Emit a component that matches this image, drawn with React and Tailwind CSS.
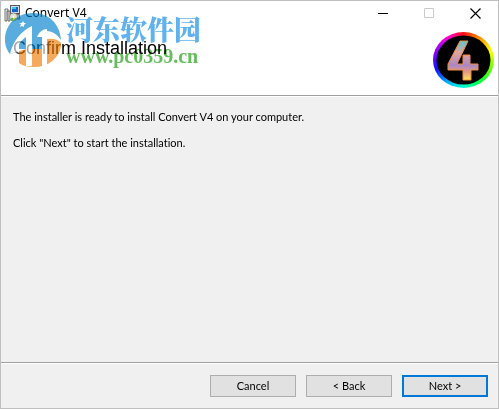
function InstallerIcon() {
  return (
    <svg width="17" height="17" viewBox="0 0 17 17" aria-hidden="true" className="shrink-0">
      <rect x="6.500" y="0.500" width="9" height="8" fill="#d5d8d8" stroke="#555b60" />
      <rect x="8" y="2" width="6" height="5" fill="#1463c6" />
      <path d="M8 2h4v2H8z" fill="#37c4ee" />
      <path d="M7 9h8l1 5H7z" fill="#b9bdb9" stroke="#444" />
      <path d="M1 4h3v2H3v10H1zM4 6h2v10H4z" fill="#e9e9e9" stroke="#555" strokeWidth="0.8" />
      <circle cx="9.500" cy="12" r="4" fill="#e2e5d2" stroke="#667" strokeWidth="0.6" />
      <path d="M9.500 12 6 14a4 4 0 0 0 3 2z" fill="#57b947" />
      <path d="M9.500 12 13 14a4 4 0 0 1-4 2z" fill="#e8c629" />
      <circle cx="9.500" cy="12" r="1" fill="#fff" />
    </svg>
  );
}

function WatermarkLogo() {
  return (
    <svg width="57" height="55" viewBox="0 0 57 55" aria-hidden="true" className="opacity-65">
      <path d="M5 41C1 36 0 31 0 27 0 11 12 0 28 0s27 11 28 27c-4-5-9-7-14-7v16H14v3c-3 0-6 1-9 2z" fill="#0280cd" />
      <path d="M56 30c0 7-3 13-9 18-5 4-11 6-18 6-6 0-11-1-15-4V38l7-2h21c7 1 12-1 14-6z" fill="#f07c08" />
      <path d="M5 41C8 28 16 18 27 13v40h-6V24c-3 2-5 4-7 7v9c-3-1-6 0-9 1z" fill="#fff" />
      <path d="M32 24c2-5 6-8 10-8v37h-5V24z" fill="#fff" />
      <path d="M41 18c7 0 13 4 15 11-4-4-9-5-15-5z" fill="#fff" />
      <path d="M42 26c5-1 11 0 14 4 0 7-3 13-9 18l-5 3z" fill="#f07c08" />
      <path d="m18 8 1 2h2l-2 2v2l-2-1-2 1 1-3-2-1h3z" fill="#fff" />
    </svg>
  );
}

function BrandLogo() {
  return (
    <div className="h-[56px] w-[61px] shrink-0 rounded-[50%] bg-[conic-gradient(#ff1010,#ff9000,#ffff00,#60ff00,#00ff40,#00ffd0,#00b0ff,#1010ff,#9000ff,#ff00e0,#ff1010)]">
      <svg width="61" height="56" viewBox="0 0 61 56" role="img" aria-label="Convert logo">
        <defs>
          <linearGradient id="four" x1="0" y1="0" x2="0" y2="1">
            <stop offset="0" stopColor="#5cc6d0" />
            <stop offset="0.3" stopColor="#e3a49c" />
            <stop offset="0.62" stopColor="#a987c5" />
            <stop offset="0.8" stopColor="#e79a82" />
            <stop offset="1" stopColor="#f8ea5b" />
          </linearGradient>
        </defs>
        <ellipse cx="30.500" cy="28" rx="27" ry="24.500" fill="#000" />
        <path d="M27 9h8L24 32h6V23h7v9h8v6h-7v10h-8V38H15v-6z" fill="url(#four)" stroke="#f08c3a" strokeLinejoin="round" />
      </svg>
    </div>
  );
}

function WindowControls() {
  return (
    <div className="flex">
      <button aria-label="Minimize" className="grid h-6 w-[46px] place-items-center">
        <svg width="11" height="11" viewBox="0 0 11 11"><path d="M0 5.500h10" stroke="#000" /></svg>
      </button>
      <button aria-label="Maximize" disabled className="grid h-6 w-[46px] place-items-center">
        <svg width="11" height="11" viewBox="0 0 11 11"><path d="M.5.5h9v9h-9z" fill="none" stroke="#ccc" /></svg>
      </button>
      <button aria-label="Close" className="grid h-6 w-[46px] place-items-center">
        <svg width="11" height="11" viewBox="0 0 11 11"><path d="m.5.5 10 10m0-10-10 10" stroke="#000" strokeWidth="1.200" /></svg>
      </button>
    </div>
  );
}

export default function App() {
  return (
    <main className="relative flex h-screen flex-col border border-[#bfbfbf] bg-[#f0f0f0] font-['Lato',sans-serif] text-[11px] text-black [font-variant-ligatures:none]">
      <header className="h-[95px] border-b border-[#a0a0a0] bg-white">
        <div className="flex h-6 items-center justify-between pl-[3px]">
          <div className="flex items-center gap-1">
            <InstallerIcon />
            <span className="font-['Noto_Sans',sans-serif] text-[12px]">Convert V4</span>
          </div>
          <WindowControls />
        </div>
        <div className="flex items-start justify-between pr-1 pl-3">
          <h1 className="pt-3 font-['Liberation_Sans',Arial,sans-serif] text-[18px] leading-[22px]">Confirm Installation</h1>
          <div className="pt-[7px]"><BrandLogo /></div>
        </div>
      </header>
      <section className="flex-1 border-t border-white px-3 pt-[13px] leading-[14px]">
        <p>The installer is ready to install Convert V4 on your computer.</p>
        <p className="pt-3">Click "Next" to start the installation.</p>
      </section>
      <footer className="flex justify-end gap-[10px] border-t border-[#a0a0a0] pt-3 pr-[10px] pb-[11px] shadow-[inset_0_1px_0_white]">
        <button className="h-[22px] w-[86px] border border-[#adadad] bg-[#e1e1e1]">Cancel</button>
        <button className="h-[22px] w-[86px] border border-[#adadad] bg-[#e1e1e1]">&lt; Back</button>
        <button className="h-[22px] w-[86px] border-2 border-[#0078d7] bg-[#e1e1e1]">Next &gt;</button>
      </footer>
      <div className="pointer-events-none absolute top-3 left-1">
        <WatermarkLogo />
      </div>
      <div className="pointer-events-none absolute top-[11px] left-[65px] whitespace-nowrap mix-blend-multiply">
        <div className="font-['Noto_Serif_CJK_SC','Noto_Sans_CJK_SC',sans-serif] text-[27px] leading-[33px] font-black text-[#5fb2ee]">河东软件园</div>
        <div className="font-['Liberation_Serif',serif] text-[20px] leading-[22px] font-bold text-[#66bd5c]">www.pc0359.cn</div>
      </div>
    </main>
  );
}
